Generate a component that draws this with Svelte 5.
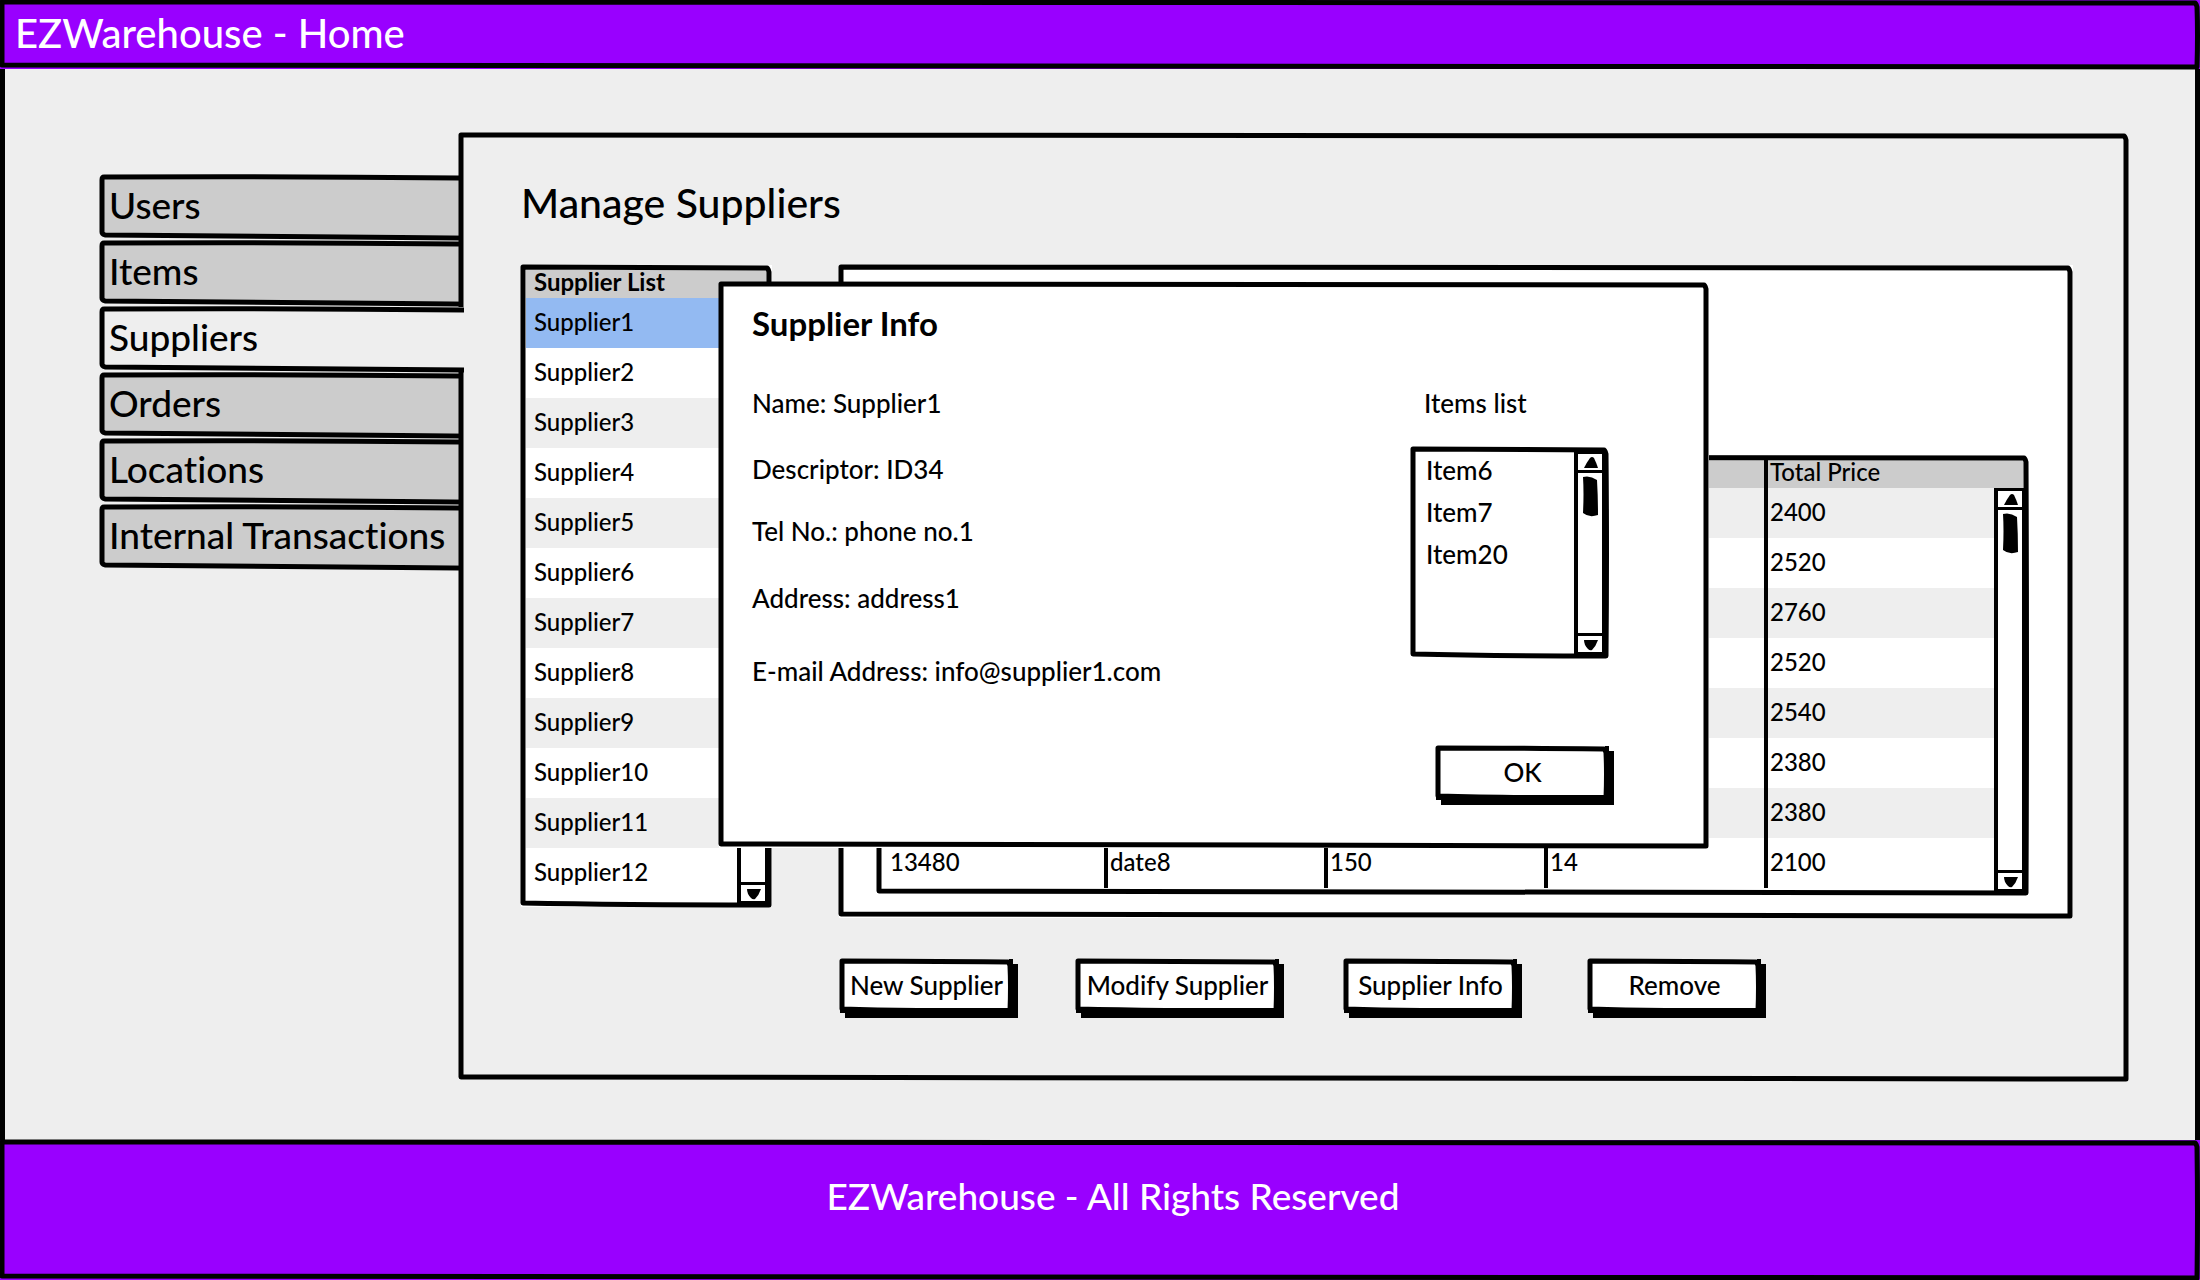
<script>
  const tabs = ['Users', 'Items', 'Suppliers', 'Orders', 'Locations', 'Internal Transactions'];
  const suppliers = Array.from({ length: 12 }, (_, i) => `Supplier${i + 1}`);
  const headings = ['', '', '', '', 'Total Price'];
  const orders = [
    ['', '', '', '', '2400'],
    ['', '', '', '', '2520'],
    ['', '', '', '', '2760'],
    ['', '', '', '', '2520'],
    ['', '', '', '', '2540'],
    ['', '', '', '', '2380'],
    ['', '', '', '', '2380'],
    ['13480', 'date8', '150', '14', '2100'],
  ];
  const info = [
    ['Name', 'Supplier1'],
    ['Descriptor', 'ID34'],
    ['Tel No.', 'phone no.1'],
    ['Address', 'address1'],
    ['E-mail Address', 'info@supplier1.com'],
  ];
  const items = ['Item6', 'Item7', 'Item20'];

  let activeTab = $state('Suppliers');
  let selected = $state('Supplier1');
  let open = $state(true);
</script>

{#snippet frame(w, h)}
  <svg class="frame" viewBox="0 0 {w} {h}" preserveAspectRatio="none" aria-hidden="true">
    <path d="M2 2 Q{w * 0.4} 2 {w - 5} 3 Q{w - 4} 3 {w - 3} 7 Q{w - 2} {h * 0.5} {w - 3} {h - 2} Q{w * 0.4} {h - 2} 2 {h - 4} Q2 {h * 0.5} 2 2Z" />
  </svg>
{/snippet}

{#snippet scrollbar()}
  <div class="scrollbar">
    <button class="up" aria-label="Scroll up">
      <svg viewBox="0 0 24 16" aria-hidden="true"><path d="M6 14 Q9 8 12 4 Q14 2 16 4 Q18 8 20 14Z" /></svg>
    </button>
    <svg class="thumb" viewBox="0 0 24 44" aria-hidden="true"><path d="M5 4 Q12 2 19 7 Q20 24 20 42 Q11 45 5 40 Q6 20 5 4Z" /></svg>
    <button class="down" aria-label="Scroll down">
      <svg viewBox="0 0 24 16" aria-hidden="true"><path d="M6 4 H20 Q18 10 14 14 Q12 15 10 13 Q6 9 6 4Z" /></svg>
    </button>
  </div>
{/snippet}

<div class="app">
  <header class="bar top">
    {@render frame(2200, 69)}
    <span>EZWarehouse - Home</span>
  </header>

  <main>
    <nav>
      {#each tabs as tab}
        <button class="tab" class:active={tab === activeTab} onclick={() => (activeTab = tab)}>
          <svg class="frame" viewBox="0 0 359 64" preserveAspectRatio="none" aria-hidden="true">
            <path d="M359 3 Q180 1 4 2 Q2 2 2 5 V57 Q2 59 5 60 Q180 62 359 63" />
          </svg>
          {tab}
        </button>
      {/each}
    </nav>

    <section class="panel">
      {@render frame(1670, 948)}
      <h1>Manage Suppliers</h1>
      <div class="content">
        <div class="list">
          <table>
            <thead><tr><th>Supplier List</th></tr></thead>
            <tbody>
              {#each suppliers as name}
                <tr class:selected={name === selected} onclick={() => (selected = name)}><td>{name}</td></tr>
              {/each}
            </tbody>
          </table>
          {@render scrollbar()}
          {@render frame(251, 642)}
        </div>

        <div class="details">
          {@render frame(1234, 653)}
          <div class="orders">
            <table>
              <colgroup><col class="first" /><col class="mid" /><col class="mid" /><col class="mid" /><col /></colgroup>
              <thead><tr>{#each headings as heading}<th>{heading}</th>{/each}</tr></thead>
              <tbody>
                {#each orders as row}
                  <tr>{#each row as cell}<td>{cell}</td>{/each}</tr>
                {/each}
              </tbody>
            </table>
            {@render scrollbar()}
            {@render frame(1152, 440)}
          </div>
        </div>
      </div>

      <div class="actions">
        <button class="btn">{@render frame(173, 54)}New Supplier</button>
        <button class="btn wide">{@render frame(203, 54)}Modify Supplier</button>
        <button class="btn" onclick={() => (open = true)}>{@render frame(173, 54)}Supplier Info</button>
        <button class="btn">{@render frame(173, 54)}Remove</button>
      </div>

      {#if open}
        <div class="dialog" role="dialog" aria-labelledby="dialog-title">
          {@render frame(990, 566)}
          <div class="facts">
            <h2 id="dialog-title">Supplier Info</h2>
            {#each info as [label, value]}
              <p>{label}: {value}</p>
            {/each}
          </div>
          <div class="side">
            <h3 id="items-title">Items list</h3>
            <div class="items">
              <ul aria-labelledby="items-title">
                {#each items as item}<li>{item}</li>{/each}
              </ul>
              {@render scrollbar()}
              {@render frame(198, 210)}
            </div>
            <button class="btn ok" onclick={() => (open = false)}>{@render frame(173, 54)}OK</button>
          </div>
        </div>
      {/if}
    </section>
  </main>

  <footer class="bar bottom">
    {@render frame(2200, 140)}
    <span>EZWarehouse - All Rights Reserved</span>
  </footer>
</div>

<style>
  :global(body) {
    margin: 0;
    background: #eee;
  }
  .app {
    min-height: 100vh;
    display: flex;
    flex-direction: column;
    font-family: Lato, 'Liberation Sans', sans-serif;
    font-weight: 500;
    font-size: 24px;
    font-variant-ligatures: none;
    color: #000;
  }
  .app * {
    box-sizing: border-box;
  }
  button {
    font: inherit;
    font-variant-ligatures: none;
    color: inherit;
    border: 0;
    padding: 0;
    background: none;
    cursor: pointer;
  }
  h1, h2, h3, p, ul {
    margin: 0;
    padding: 0;
    font-weight: inherit;
    list-style: none;
  }
  .frame {
    position: absolute;
    inset: 0;
    width: 100%;
    height: 100%;
    overflow: visible;
    pointer-events: none;
  }
  .frame path {
    fill: none;
    stroke: #000;
    stroke-width: 5px;
    stroke-linejoin: round;
    vector-effect: non-scaling-stroke;
  }
  .bar {
    position: relative;
    display: flex;
    background: #90f;
    color: #fff;
  }
  .top {
    height: 69px;
    align-items: center;
    padding: 0 15px 4px;
    font-size: 40px;
  }
  .bottom {
    height: 140px;
    justify-content: center;
    padding: 32px 0 0 26px;
    font-size: 37px;
    line-height: 48px;
  }
  main {
    flex: 1;
    display: flex;
    padding: 64px 66px 59px 95px;
    border: solid #000;
    border-width: 0 5px;
  }
  nav {
    width: 359px;
    flex: none;
    padding-top: 42px;
    display: flex;
    flex-direction: column;
    gap: 2px;
  }
  .tab {
    position: relative;
    height: 64px;
    padding: 0 0 5px 9px;
    text-align: left;
    background: linear-gradient(#ccc, #ccc) 2px 2px / 100% 58px no-repeat;
    font-size: 37px;
    white-space: nowrap;
  }
  .tab.active {
    z-index: 1;
    margin-right: -5px;
    background: #eee;
  }
  .panel {
    position: relative;
    flex: 1;
    min-width: 0;
    padding: 46px 56px 60px 62px;
  }
  h1 {
    font-size: 41px;
    line-height: 48px;
  }
  .content {
    display: flex;
    align-items: flex-start;
    gap: 67px;
    margin-top: 38px;
  }
  .list, .orders, .items {
    position: relative;
    background: #fff;
  }
  .list {
    width: 251px;
    flex: none;
    padding: 5px 5px 9px;
  }
  .details {
    position: relative;
    flex: 1;
    min-width: 0;
    background: #fff;
    padding: 190px 44px 23px 38px;
  }
  .orders {
    padding: 5px 5px 7px;
  }
  table {
    width: 100%;
    table-layout: fixed;
    border-collapse: collapse;
  }
  th, td {
    padding: 0 0 2px 8px;
    text-align: left;
    font-weight: inherit;
    line-height: 24px;
  }
  th {
    height: 28px;
    padding-bottom: 4px;
    background: #ccc;
  }
  td {
    height: 50px;
  }
  .list th {
    font-weight: 700;
  }
  .list tr:nth-child(odd) td, .orders tr:nth-child(odd) td {
    background: #eee;
  }
  .list tr.selected td {
    background: #93baf2;
  }
  .first {
    width: 222px;
  }
  .mid {
    width: 220px;
  }
  .orders th + th, .orders td + td {
    box-shadow: inset 4px 0 #000;
    padding-left: 6px;
  }
  .scrollbar {
    position: absolute;
    top: 4px;
    right: 4px;
    bottom: 4px;
    width: 31px;
    display: flex;
    flex-direction: column;
    background: #fff;
    border: solid #000;
    border-width: 3px 3px 2px 4px;
  }
  .list .scrollbar, .orders .scrollbar {
    top: 33px;
  }
  .scrollbar svg {
    display: block;
    width: 24px;
  }
  .scrollbar button {
    height: 19px;
  }
  .up {
    border-bottom: 3px solid #000;
  }
  .down {
    margin-top: auto;
    border-top: 3px solid #000;
  }
  .actions {
    display: grid;
    grid-template-columns: 236px 268px 244px 173px;
    margin: 41px 0 0 319px;
  }
  .btn {
    position: relative;
    width: 173px;
    height: 54px;
    padding-bottom: 2px;
    background: #fff;
    box-shadow: 5px 5px #000, inset -4px -5px #000;
    font-size: 26px;
    white-space: nowrap;
  }
  .wide {
    width: 203px;
  }
  .dialog {
    position: absolute;
    top: 149px;
    left: 260px;
    right: 420px;
    display: flex;
    justify-content: space-between;
    padding: 25px 95px 48px 33px;
    background: #fff;
    font-size: 26px;
    line-height: 32px;
  }
  .facts {
    display: grid;
    grid-template-rows: 80px 66px 62px 67px 73px 32px;
  }
  h2 {
    font-size: 33px;
    line-height: 32px;
    font-weight: 700;
  }
  .side {
    display: flex;
    flex-direction: column;
    padding: 80px 5px 0 0;
  }
  h3 {
    padding-left: 13px;
    font-size: 26px;
  }
  .items {
    width: 198px;
    height: 211px;
    margin: 28px 0 88px;
    padding: 2px 15px;
  }
  li {
    line-height: 42px;
  }
  .ok {
    align-self: flex-end;
  }
</style>
